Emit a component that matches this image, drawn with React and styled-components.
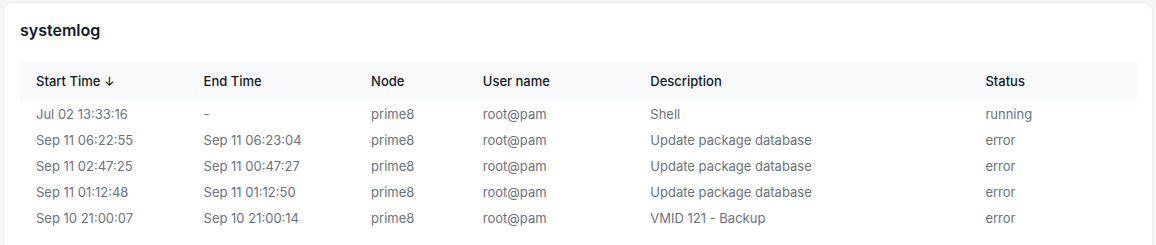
import styled, { createGlobalStyle } from 'styled-components';

const GlobalStyle = createGlobalStyle`
  html, body {
    margin: 0;
    padding: 0;
    background: #f5f5f6;
    font-family: Inter, "Noto Sans", sans-serif;
  }
`;

const columns = [
  { key: 'start', label: 'Start Time', width: '15%', sorted: true },
  { key: 'end', label: 'End Time', width: '15%' },
  { key: 'node', label: 'Node', width: '10%' },
  { key: 'user', label: 'User name', width: '15%' },
  { key: 'desc', label: 'Description', width: '30%' },
  { key: 'status', label: 'Status', width: '15%' },
];

const rows = [
  { start: 'Jul 02 13:33:16', end: '-', node: 'prime8', user: 'root@pam', desc: 'Shell', status: 'running' },
  { start: 'Sep 11 06:22:55', end: 'Sep 11 06:23:04', node: 'prime8', user: 'root@pam', desc: 'Update package database', status: 'error' },
  { start: 'Sep 11 02:47:25', end: 'Sep 11 00:47:27', node: 'prime8', user: 'root@pam', desc: 'Update package database', status: 'error' },
  { start: 'Sep 11 01:12:48', end: 'Sep 11 01:12:50', node: 'prime8', user: 'root@pam', desc: 'Update package database', status: 'error' },
  { start: 'Sep 10 21:00:07', end: 'Sep 10 21:00:14', node: 'prime8', user: 'root@pam', desc: 'VMID 121 - Backup', status: 'error' },
];

function App () {
  return (
    <>
      <GlobalStyle />
      <Page>
        <Card>
          <Title>systemlog</Title>
          <Table>
            <colgroup>
              {columns.map(c => <col key={c.key} style={{ width: c.width }} />)}
            </colgroup>
            <thead>
              <HeadRow>
                {columns.map(c => (
                  <Th key={c.key}>
                    {c.label}
                    {c.sorted && <SortArrow>↓</SortArrow>}
                  </Th>
                ))}
              </HeadRow>
            </thead>
            <tbody>
              {rows.map((row, i) => (
                <tr key={i}>
                  {columns.map(c => <Td key={c.key}>{row[c.key]}</Td>)}
                </tr>
              ))}
            </tbody>
          </Table>
        </Card>
      </Page>
    </>
  );
}

export default App;

const Page = styled.div`
  padding: 3px 4px 0 4px;
  height: 245px;
  box-sizing: border-box;
  overflow: hidden;
`;

const Card = styled.div`
  background: #ffffff;
  border-radius: 8px;
  box-shadow: 0 0 0 1px #ececee, 0 1px 2px rgba(0, 0, 0, 0.03);
  padding: 18px 15px 40px 16px;
  min-height: 260px;
  box-sizing: border-box;
`;

const Title = styled.h2`
  margin: 0 0 20px 0;
  font-size: 16px;
  line-height: 18px;
  padding-bottom: 2px;
  font-weight: 600;
  color: #111827;
`;

const Table = styled.table`
  width: 100%;
  border-collapse: collapse;
  table-layout: fixed;
`;

const HeadRow = styled.tr`
  background: #f8f9fb;
`;

const Th = styled.th`
  text-align: left;
  height: 40px;
  padding: 0 16px;
  font-size: 13px;
  font-weight: 500;
  color: #111827;
  white-space: nowrap;
`;

const SortArrow = styled.span`
  margin-left: 4px;
  font-size: 12px;
`;

const Td = styled.td`
  height: 26px;
  padding: 0 16px;
  font-size: 13px;
  color: #6b7280;
  white-space: nowrap;
`;
